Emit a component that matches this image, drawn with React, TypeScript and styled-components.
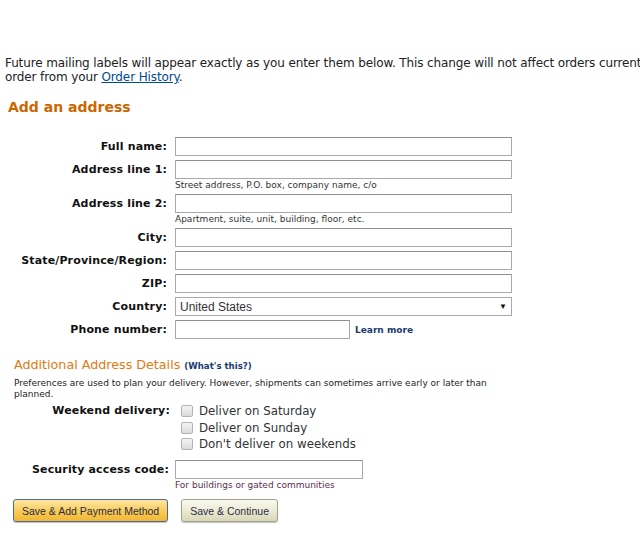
import React from "react";
import styled, { createGlobalStyle } from "styled-components";

const Global = createGlobalStyle`
  html, body { margin: 0; padding: 0; background: #fff; }
  body { font-family: "DejaVu Sans", Verdana, sans-serif; color: #333; }
  * { box-sizing: border-box; }
`;

const Page = styled.div`
  width: 640px;
  height: 540px;
  overflow: hidden;
  padding: 56px 0 0 5px;
`;

const Intro = styled.p`
  margin: 0;
  font-size: 12px;
  line-height: 14px;
  letter-spacing: -0.12px;
  white-space: nowrap;
  overflow: hidden;
  color: #222;
`;

const Link = styled.a`
  color: #004b91;
  text-decoration: underline;
`;

const Heading = styled.h2`
  margin: 14px 0 21px 3px;
  font-size: 14px;
  line-height: 18px;
  font-weight: bold;
  color: #cc6600;
`;

const Form = styled.div`
  display: flex;
  flex-direction: column;
`;

const Row = styled.div<{ $mb?: number }>`
  display: grid;
  grid-template-columns: 162px 1fr;
  column-gap: 8px;
  align-items: start;
  margin-bottom: ${(p) => p.$mb ?? 4}px;
`;

const Label = styled.label`
  text-align: right;
  font-weight: bold;
  font-size: 11px;
  line-height: 19px;
  letter-spacing: 0.15px;
  color: #111;
  white-space: nowrap;
`;

const Field = styled.div`
  display: flex;
  flex-direction: column;
`;

const Input = styled.input<{ $w?: number }>`
  width: ${(p) => p.$w ?? 337}px;
  height: 19px;
  margin: 0;
  border: 1px solid #a9a9a9;
  border-top-color: #8f8f8f;
  background: #fff;
  padding: 0 3px;
`;

const Hint = styled.div<{ $color?: string }>`
  font-size: 9px;
  line-height: 11px;
  margin-top: 1px;
  color: ${(p) => p.$color ?? "#333"};
  white-space: nowrap;
`;

const Select = styled.div`
  width: 337px;
  height: 19px;
  border: 1px solid #a9a9a9;
  display: flex;
  align-items: center;
  justify-content: space-between;
  padding: 0 4px 0 4px;
  font-family: "Liberation Sans", Arial, sans-serif;
  font-size: 12px;
  color: #333;
`;

const Arrow = styled.span`
  font-size: 8px;
  color: #111;
`;

const Inline = styled.div`
  display: flex;
  align-items: center;
  gap: 5px;
`;

const SmallLink = styled.a`
  font-size: 9px;
  font-weight: bold;
  color: #1a3a6e;
  text-decoration: none;
`;

const SubHeading = styled.div`
  margin: 14px 0 0 9px;
  font-size: 12.7px;
  line-height: 16px;
  color: #e47911;
  white-space: nowrap;
`;

const QuestionLink = styled(SmallLink)`
  font-size: 8.6px;
`;

const Note = styled.p`
  margin: 3.5px 0 2.5px 9px;
  font-size: 9px;
  line-height: 11px;
  color: #222;
  width: 475px;
`;

const Options = styled.div`
  display: flex;
  flex-direction: column;
  gap: 2.5px;
  padding-left: 6px;
  padding-top: 2px;
`;

const Option = styled.label`
  display: flex;
  align-items: center;
  gap: 6px;
  font-size: 11.8px;
  line-height: 14px;
  color: #333;
  white-space: nowrap;
`;

const Box = styled.span`
  width: 12px;
  height: 12px;
  border: 1px solid #b3b3b3;
  border-radius: 2px;
  background: linear-gradient(#f4f4f4, #dadada);
`;

const WeekendLabel = styled(Label)`
  line-height: 18px;
  margin-right: -3px;
`;

const SecurityLabel = styled(Label)`
  margin-right: -2px;
`;

const Buttons = styled.div`
  display: flex;
  gap: 13px;
  margin: 8px 0 0 8px;
`;

const Button = styled.button<{ $primary?: boolean }>`
  height: 23px;
  padding: 0 8px;
  border-radius: 3px;
  font-family: "Liberation Sans", Arial, sans-serif;
  font-size: 10.5px;
  color: #2b2b4a;
  border: 1px solid ${(p) => (p.$primary ? "#4e6a9a" : "#a3a38a")};
  background: ${(p) =>
    p.$primary
      ? "linear-gradient(#fde7a5 0%, #f9cd5a 50%, #f3b72f 100%)"
      : "linear-gradient(#f9faef 0%, #ecebd4 50%, #d8d7b7 100%)"};
  box-shadow: 0 1px 1px rgba(0, 0, 0, 0.25);
`;

export default function App() {
  return (
    <Page>
      <Global />
      <Intro>
        Future mailing labels will appear exactly as you enter them below. This change will not affect orders currently in process.
        <br />
        order from your <Link href="#">Order History</Link>.
      </Intro>
      <Heading>Add an address</Heading>
      <Form>
        <Row>
          <Label>Full name:</Label>
          <Input />
        </Row>
        <Row $mb={3}>
          <Label>Address line 1:</Label>
          <Field>
            <Input />
            <Hint>Street address, P.O. box, company name, c/o</Hint>
          </Field>
        </Row>
        <Row $mb={3}>
          <Label>Address line 2:</Label>
          <Field>
            <Input />
            <Hint>Apartment, suite, unit, building, floor, etc.</Hint>
          </Field>
        </Row>
        <Row>
          <Label>City:</Label>
          <Input />
        </Row>
        <Row>
          <Label>State/Province/Region:</Label>
          <Input />
        </Row>
        <Row>
          <Label>ZIP:</Label>
          <Input />
        </Row>
        <Row>
          <Label>Country:</Label>
          <Select>
            <span>United States</span>
            <Arrow>▼</Arrow>
          </Select>
        </Row>
        <Row>
          <Label>Phone number:</Label>
          <Inline>
            <Input $w={175} />
            <SmallLink href="#">Learn more</SmallLink>
          </Inline>
        </Row>
      </Form>
      <SubHeading>
        Additional Address Details <QuestionLink href="#">(What's this?)</QuestionLink>
      </SubHeading>
      <Note>
        Preferences are used to plan your delivery. However, shipments can sometimes arrive early or later than planned.
      </Note>
      <Row $mb={9}>
        <WeekendLabel>Weekend delivery:</WeekendLabel>
        <Options>
          <Option><Box />Deliver on Saturday</Option>
          <Option><Box />Deliver on Sunday</Option>
          <Option><Box />Don't deliver on weekends</Option>
        </Options>
      </Row>
      <Row $mb={0}>
        <SecurityLabel>Security access code:</SecurityLabel>
        <Field>
          <Input $w={188} />
          <Hint $color="#5a2d4d">For buildings or gated communities</Hint>
        </Field>
      </Row>
      <Buttons>
        <Button $primary>Save &amp; Add Payment Method</Button>
        <Button>Save &amp; Continue</Button>
      </Buttons>
    </Page>
  );
}
